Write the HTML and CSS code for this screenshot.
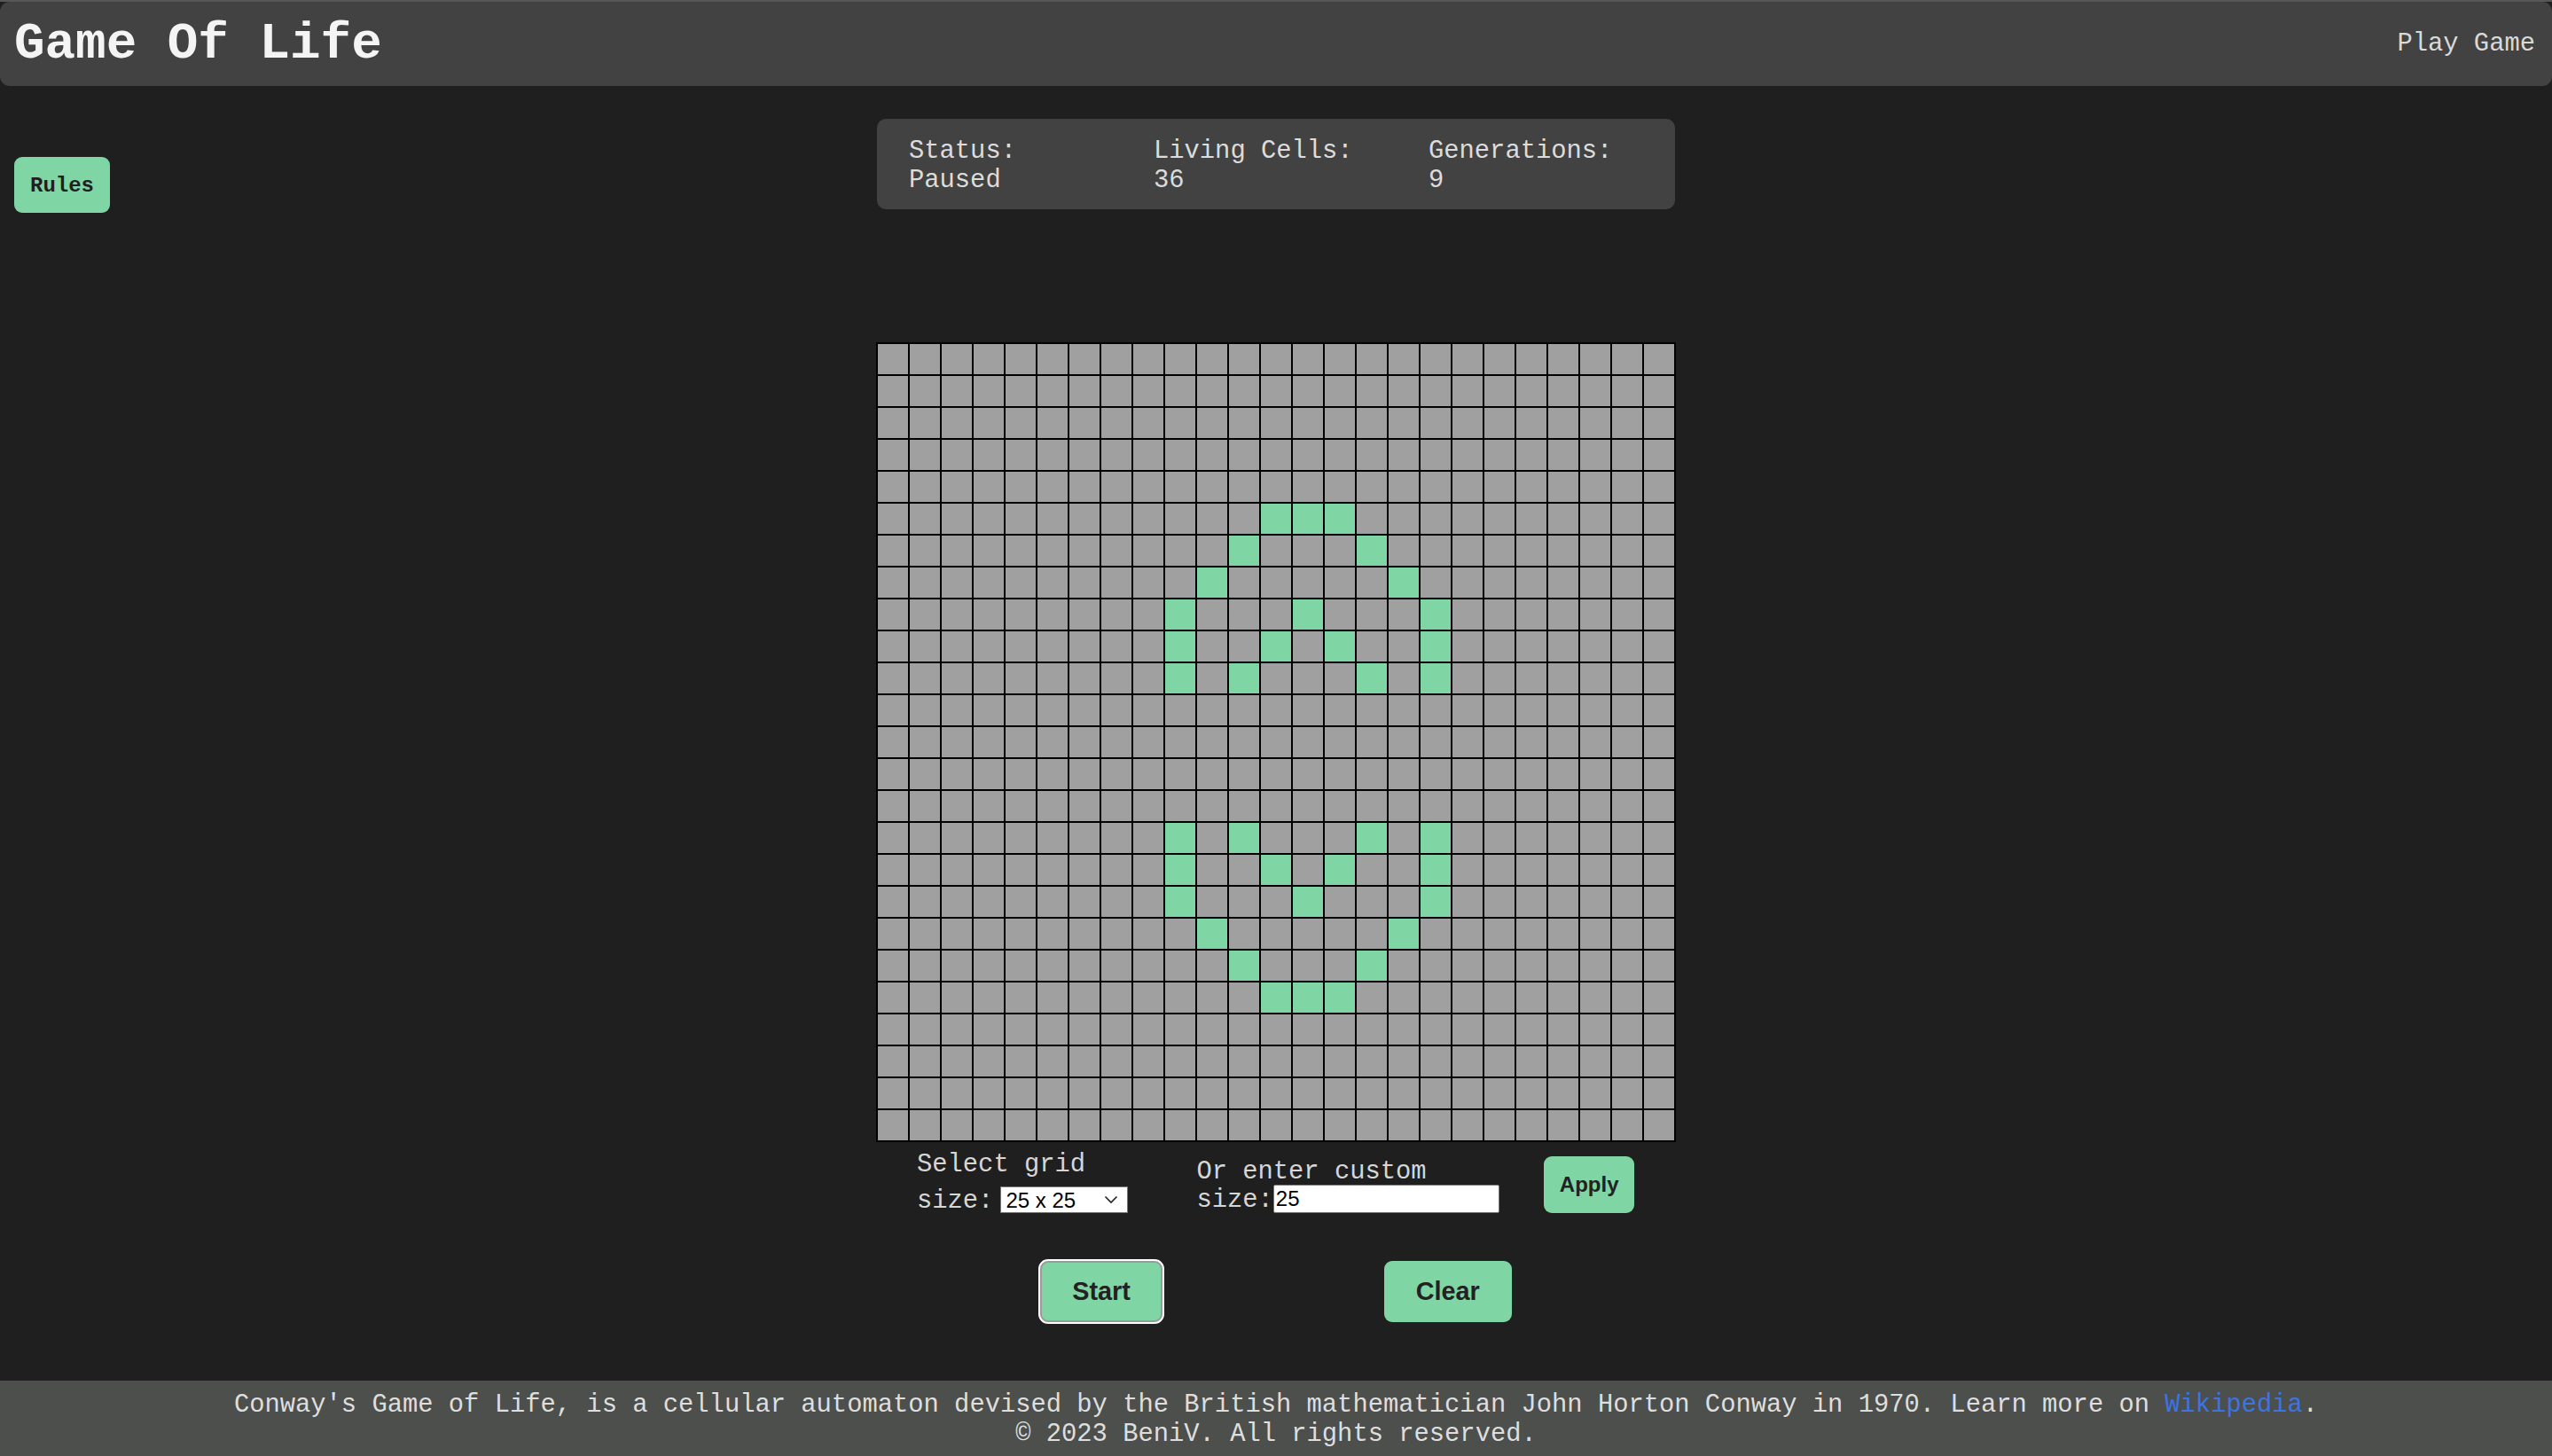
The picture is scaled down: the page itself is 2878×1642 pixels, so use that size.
FILE: index.html
```html
<!DOCTYPE html>
<html lang="en">
<head>
<meta charset="utf-8">
<title>Game Of Life</title>
<link rel="stylesheet" href="styles.css">
</head>
<body>
<header class="topbar">
  <h1 class="brand">Game Of Life</h1>
  <nav class="nav"><a class="nav-link" href="#">Play Game</a></nav>
</header>
<main class="layout">
  <aside class="side side-left">
    <button class="rules-btn" type="button">Rules</button>
  </aside>
  <section class="game">
    <div class="stats">
      <div class="stat"><div class="stat-label">Status:</div><div class="stat-value">Paused</div></div>
      <div class="stat"><div class="stat-label">Living Cells:</div><div class="stat-value">36</div></div>
      <div class="stat"><div class="stat-label">Generations:</div><div class="stat-value">9</div></div>
    </div>
    <div class="board" id="board"></div>
    <div class="controls">
      <div class="ctl ctl-select">
        <div class="ctl-line">Select grid</div>
        <div class="ctl-row"><span class="ctl-text">size:</span><span class="select-wrap"><select class="size-select"><option>10 x 10</option><option selected>25 x 25</option><option>50 x 50</option></select><svg class="select-arrow" width="16" height="10" viewBox="0 0 16 10" aria-hidden="true"><path d="M1.5 1.5 L8 8 L14.5 1.5" fill="none" stroke="#222" stroke-width="1.6"/></svg></span></div>
      </div>
      <div class="ctl ctl-custom">
        <div class="ctl-line">Or enter custom</div>
        <div class="ctl-row"><span class="ctl-text">size:</span><input class="size-input" type="text" value="25"></div>
      </div>
      <button class="apply-btn" type="button">Apply</button>
    </div>
    <div class="actions">
      <button class="action-btn is-focused" type="button">Start</button>
      <button class="action-btn" type="button">Clear</button>
    </div>
  </section>
  <div class="side"></div>
</main>
<footer class="footer">
  <p class="footer-line">Conway's Game of Life, is a cellular automaton devised by the British mathematician John Horton Conway in 1970. Learn more on <a class="footer-link" href="#">Wikipedia</a>.</p>
  <p class="footer-line">© 2023 BeniV. All rights reserved.</p>
</footer>
<script src="app.js"></script>
</body>
</html>
```

FILE: styles.css
```css
* {
  box-sizing: border-box;
}

html {
  background: #1f1f1f;
}

body {
  margin: 0;
  min-height: 100vh;
  display: flex;
  flex-direction: column;
  background: #1f1f1f;
  border-top: 2px solid #575757;
  font-family: "Liberation Mono", "Courier New", monospace;
  color: #dcdcdc;
}

.topbar {
  height: 95px;
  display: flex;
  align-items: center;
  justify-content: space-between;
  padding: 0 19px 0 16px;
  background: #424242;
  border-radius: 11px;
}

.brand {
  margin: 0;
  font-size: 57.6px;
  font-weight: 700;
  line-height: normal;
  color: #f4f4f4;
}

.nav-link {
  font-size: 28.8px;
  color: #d9d9d9;
  text-decoration: none;
}

.layout {
  flex: 1;
  display: grid;
  grid-template-columns: 1fr 900px 1fr;
  align-items: start;
}

.side-left {
  padding: 80px 0 0 16px;
}

.rules-btn {
  font-family: "Liberation Mono", "Courier New", monospace;
  font-size: 24px;
  font-weight: 700;
  line-height: normal;
  padding: 19px 18px 17px;
  border: 0;
  border-radius: 9px;
  background: #7fd6a4;
  color: #1f1f1f;
}

.game {
  display: flex;
  flex-direction: column;
  align-items: center;
  padding-top: 37px;
}

.stats {
  width: 900px;
  display: grid;
  grid-template-columns: 276px 310px 1fr;
  padding: 20px 36px 16px;
  background: #424242;
  border-radius: 10px;
  font-size: 28.8px;
  line-height: normal;
  color: #dcdcdc;
}

.board {
  margin-top: 150px;
  display: grid;
  grid-template-columns: repeat(25, 34px);
  grid-auto-rows: 34px;
  gap: 2px;
  padding: 2px;
  background: #000;
}

.cell {
  background: #a0a0a0;
}

.cell.alive {
  background: #7fd6a4;
}

.controls {
  width: 900px;
  height: 74px;
  margin-top: 6px;
  display: flex;
  align-items: flex-end;
  padding-left: 45px;
  font-size: 28.8px;
  color: #d6d6d6;
}

.ctl-line {
  line-height: 32.6px;
}

.ctl-custom .ctl-line {
  line-height: 28px;
}

.ctl-row {
  display: flex;
  align-items: center;
}

.ctl-text {
  padding-top: 2px;
}

.ctl-select {
  margin-right: 77px;
}

.ctl-select .ctl-row {
  margin-top: 7px;
  height: 30px;
}

.ctl-custom {
  margin-right: 50px;
}

.ctl-custom .ctl-row {
  margin-top: 0;
  height: 32px;
}

.select-wrap {
  position: relative;
  margin-left: 8px;
  display: flex;
}

.size-select {
  appearance: none;
  -webkit-appearance: none;
  width: 144px;
  height: 30px;
  padding: 0 24px 0 5px;
  font-family: "Liberation Sans", Arial, sans-serif;
  font-size: 24px;
  background: #fff;
  color: #000;
  border: 1px solid #767676;
  border-radius: 0;
}

.select-arrow {
  position: absolute;
  right: 11px;
  top: 10px;
  pointer-events: none;
}

.size-input {
  width: 255px;
  height: 32px;
  padding: 1px 2px;
  font-family: "Liberation Sans", Arial, sans-serif;
  font-size: 24px;
  background: #fff;
  color: #000;
  border: 1px solid #767676;
  border-radius: 2px;
}

.apply-btn {
  font-family: "Liberation Sans", Arial, sans-serif;
  font-size: 24px;
  font-weight: 700;
  line-height: normal;
  padding: 18px;
  border: 0;
  border-radius: 9px;
  background: #7fd6a4;
  color: #222;
}

.actions {
  margin-top: 54px;
  display: flex;
  justify-content: center;
  gap: 250px;
}

.action-btn {
  font-family: "Liberation Sans", Arial, sans-serif;
  font-size: 28.8px;
  font-weight: 700;
  line-height: normal;
  padding: 18px 36px;
  border: 0;
  border-radius: 9px;
  background: #7fd6a4;
  color: #222;
}

.action-btn.is-focused {
  outline: 2px solid #fff;
  box-shadow: inset 0 0 0 2px #9a9a9a;
}

.footer {
  padding: 11px 0 8px;
  background: #4d4f4c;
  text-align: center;
  font-size: 28.8px;
  line-height: normal;
  color: #dedede;
}

.footer-line {
  margin: 0;
}

.footer-link {
  color: #3c74e2;
  text-decoration: none;
}
```

FILE: app.js
```js
(function () {
  var live = {
    5: [12, 13, 14],
    6: [11, 15],
    7: [10, 16],
    8: [9, 13, 17],
    9: [9, 12, 14, 17],
    10: [9, 11, 15, 17],
    15: [9, 11, 15, 17],
    16: [9, 12, 14, 17],
    17: [9, 13, 17],
    18: [10, 16],
    19: [11, 15],
    20: [12, 13, 14]
  };
  var board = document.getElementById('board');
  var size = 25;
  for (var r = 0; r < size; r++) {
    for (var c = 0; c < size; c++) {
      var cell = document.createElement('div');
      cell.className = 'cell';
      if (live[r] && live[r].indexOf(c) !== -1) {
        cell.className += ' alive';
      }
      board.appendChild(cell);
    }
  }
})();
```
